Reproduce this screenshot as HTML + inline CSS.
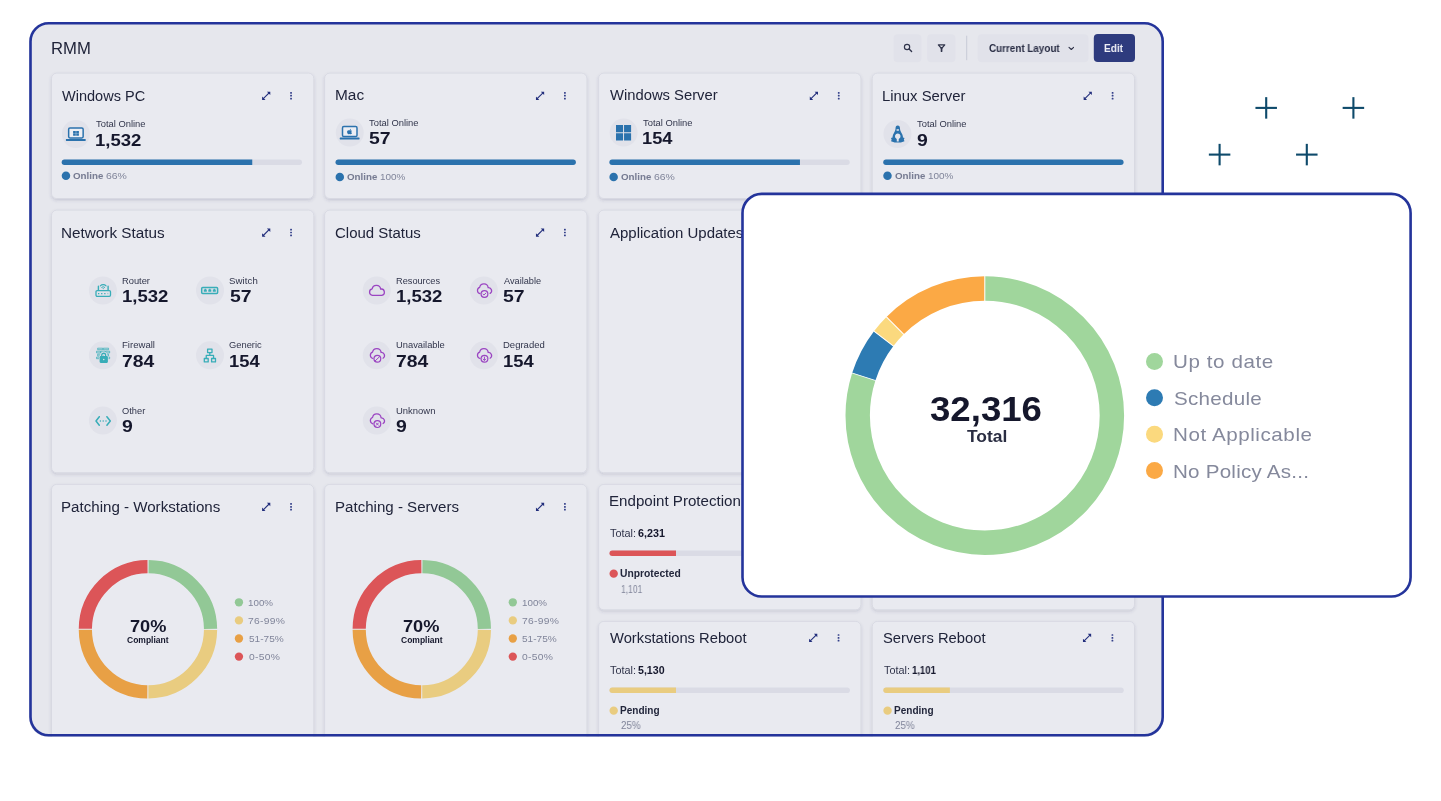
<!DOCTYPE html>
<html lang="en"><head><meta charset="utf-8"><title>RMM Dashboard</title>
<style>
html,body{margin:0;padding:0;background:#fff;}
body{width:1441px;height:801px;position:relative;overflow:hidden;font-family:"Liberation Sans",sans-serif;}
.a{position:absolute;}
.t{position:absolute;white-space:nowrap;transform-origin:0 50%;will-change:transform;}
.card{position:absolute;box-sizing:border-box;background:#e9eaf0;border:1px solid #dfe0e8;border-radius:5px;box-shadow:0 2px 5px rgba(60,65,100,.13),0 0 2px rgba(60,65,100,.06);}
</style></head><body>
<div class="a" id="panel" style="left:29.2px;top:22.0px;width:1134.8px;height:714.6px;border-radius:19.5px;background:#e6e7ed;overflow:hidden">
<div class="a" style="left:-29.2px;top:-22.0px;width:1441px;height:801px">
<svg class="a" style="left:0;top:0" width="1441" height="801" viewBox="0 0 1441 801"><defs><filter id="sh" x="-5%" y="-5%" width="110%" height="115%"><feDropShadow dx="0" dy="1.6" stdDeviation="1.7" flood-color="#3c4166" flood-opacity="0.17"/></filter></defs><g filter="url(#sh)"><rect x="51.50" y="73.10" width="262.30" height="125.40" rx="5.2" fill="#e9eaf0" stroke="#d6d7e1" stroke-width="0.8"/><rect x="324.60" y="73.10" width="262.30" height="125.40" rx="5.2" fill="#e9eaf0" stroke="#d6d7e1" stroke-width="0.8"/><rect x="598.60" y="73.10" width="262.30" height="125.40" rx="5.2" fill="#e9eaf0" stroke="#d6d7e1" stroke-width="0.8"/><rect x="872.20" y="73.10" width="262.30" height="125.40" rx="5.2" fill="#e9eaf0" stroke="#d6d7e1" stroke-width="0.8"/><rect x="51.50" y="210.10" width="262.30" height="262.60" rx="5.2" fill="#e9eaf0" stroke="#d6d7e1" stroke-width="0.8"/><rect x="324.60" y="210.10" width="262.30" height="262.60" rx="5.2" fill="#e9eaf0" stroke="#d6d7e1" stroke-width="0.8"/><rect x="598.60" y="210.10" width="262.30" height="262.60" rx="5.2" fill="#e9eaf0" stroke="#d6d7e1" stroke-width="0.8"/><rect x="872.20" y="210.10" width="262.30" height="262.60" rx="5.2" fill="#e9eaf0" stroke="#d6d7e1" stroke-width="0.8"/><rect x="51.50" y="484.40" width="262.30" height="262.50" rx="5.2" fill="#e9eaf0" stroke="#d6d7e1" stroke-width="0.8"/><rect x="324.60" y="484.40" width="262.30" height="262.50" rx="5.2" fill="#e9eaf0" stroke="#d6d7e1" stroke-width="0.8"/><rect x="598.60" y="484.40" width="262.30" height="125.40" rx="5.2" fill="#e9eaf0" stroke="#d6d7e1" stroke-width="0.8"/><rect x="872.20" y="484.40" width="262.30" height="125.40" rx="5.2" fill="#e9eaf0" stroke="#d6d7e1" stroke-width="0.8"/><rect x="598.60" y="621.40" width="262.30" height="125.40" rx="5.2" fill="#e9eaf0" stroke="#d6d7e1" stroke-width="0.8"/><rect x="872.20" y="621.40" width="262.30" height="125.40" rx="5.2" fill="#e9eaf0" stroke="#d6d7e1" stroke-width="0.8"/></g></svg>
<svg class="a" style="left:0;top:0" width="1441" height="801" viewBox="0 0 1441 801"><rect x="893.60" y="34.20" width="27.80" height="28.00" rx="4" fill="#e1e2ea"/><rect x="927.20" y="34.20" width="28.20" height="28.00" rx="4" fill="#e1e2ea"/><rect x="966.20" y="35.70" width="1.00" height="24.50" rx="0" fill="#c8cad6"/><rect x="977.70" y="34.20" width="110.70" height="28.00" rx="4" fill="#e1e2ea"/><rect x="1093.80" y="34.10" width="41.20" height="27.90" rx="4" fill="#2e3b7e"/><circle cx="907.05" cy="47.05" r="2.65" fill="none" stroke="#30344b" stroke-width="1.15"/><path d="M909.1 49.1L911.6 51.6" stroke="#30344b" stroke-width="1.35" stroke-linecap="round"/><path d="M938.3 44.85H944.8L941.55 48.5Z" fill="none" stroke="#30344b" stroke-width="1.15" stroke-linejoin="round"/><path d="M941.55 48.2V51.2" stroke="#30344b" stroke-width="1.7" stroke-linecap="round"/><g transform="translate(1068.40 46.30)"><path d="M0.6 1L2.9 3.2L5.2 1" fill="none" stroke="#2a2e45" stroke-width="1.05" stroke-linecap="round" stroke-linejoin="round"/></g><g transform="translate(261.70 91.30)"><path d="M1.6 7.4L7.4 1.6" stroke="#222e7c" stroke-width="1.1"/><path d="M5.2 0.4H8.6V3.8Z M0.4 5.2V8.6H3.8Z" fill="#222e7c"/></g><rect x="290.15" y="92.00" width="1.80" height="1.70" rx="0.5" fill="#34408a"/><rect x="290.15" y="94.85" width="1.80" height="1.70" rx="0.5" fill="#34408a"/><rect x="290.15" y="97.70" width="1.80" height="1.70" rx="0.5" fill="#34408a"/><rect x="61.90" y="120.00" width="28.00" height="28.00" rx="14" fill="#e1e2ea"/><g transform="translate(75.90 134.00)"><rect x="-7.25" y="-6.0" width="14.5" height="9.9" rx="1.3" fill="#eceef4" stroke="#2b72ad" stroke-width="1.5"/><rect x="-10" y="4.9" width="19.8" height="2" rx="0.4" fill="#2b72ad"/><path d="M-2.8 -2.9h2.7v2.1h-2.7zM0.3 -2.9h2.7v2.1h-2.7zM-2.8 -0.4h2.7v2.1h-2.7zM0.3 -0.4h2.7v2.1h-2.7z" fill="#2b72ad"/></g><rect x="61.70" y="159.50" width="240.30" height="5.50" rx="2.75" fill="#dadbe5"/><path d="M64.45 159.50H252.26V165.00H64.45A2.75 2.75 0 0 1 64.45 159.50Z" fill="#2b72ad"/><rect x="61.70" y="171.45" width="8.50" height="8.50" rx="4.25" fill="#2b72ad"/><g transform="translate(535.55 91.30)"><path d="M1.6 7.4L7.4 1.6" stroke="#222e7c" stroke-width="1.1"/><path d="M5.2 0.4H8.6V3.8Z M0.4 5.2V8.6H3.8Z" fill="#222e7c"/></g><rect x="564.00" y="92.00" width="1.80" height="1.70" rx="0.5" fill="#34408a"/><rect x="564.00" y="94.85" width="1.80" height="1.70" rx="0.5" fill="#34408a"/><rect x="564.00" y="97.70" width="1.80" height="1.70" rx="0.5" fill="#34408a"/><rect x="335.75" y="118.60" width="28.00" height="28.00" rx="14" fill="#e1e2ea"/><g transform="translate(349.75 132.60)"><rect x="-7.25" y="-6.0" width="14.5" height="9.9" rx="1.3" fill="#eceef4" stroke="#2b72ad" stroke-width="1.5"/><rect x="-10" y="4.9" width="19.8" height="2" rx="0.4" fill="#2b72ad"/><g transform="translate(-0.1 -0.6) scale(0.88)"><path d="M0.9 -1.9C0 -2.3 -0.6 -1.9 -1.2 -1.9C-2.3 -1.9 -2.9 -0.9 -2.9 0.1C-2.9 1.3 -2.1 2.6 -1.3 2.6C-0.8 2.6 -0.6 2.3 0 2.3C0.6 2.3 0.8 2.6 1.3 2.6C2 2.6 2.5 1.7 2.7 1.2C1.7 0.8 1.6 -0.7 2.6 -1.2C2.2 -1.8 1.5 -2.1 0.9 -1.9Z M0.2 -2.3C0.2 -3.1 0.8 -3.7 1.5 -3.8C1.6 -3 1 -2.3 0.2 -2.3Z" fill="#2b72ad"/></g></g><rect x="335.55" y="159.50" width="240.30" height="5.50" rx="2.75" fill="#dadbe5"/><rect x="335.55" y="159.50" width="240.30" height="5.50" rx="2.75" fill="#2b72ad"/><rect x="335.55" y="172.75" width="8.50" height="8.50" rx="4.25" fill="#2b72ad"/><g transform="translate(809.40 91.30)"><path d="M1.6 7.4L7.4 1.6" stroke="#222e7c" stroke-width="1.1"/><path d="M5.2 0.4H8.6V3.8Z M0.4 5.2V8.6H3.8Z" fill="#222e7c"/></g><rect x="837.85" y="92.00" width="1.80" height="1.70" rx="0.5" fill="#34408a"/><rect x="837.85" y="94.85" width="1.80" height="1.70" rx="0.5" fill="#34408a"/><rect x="837.85" y="97.70" width="1.80" height="1.70" rx="0.5" fill="#34408a"/><rect x="609.60" y="118.60" width="28.00" height="28.00" rx="14" fill="#e1e2ea"/><g transform="translate(623.60 132.60)"><path d="M-7.6 -7.5h7.05v7.2h-7.05zM0.45 -7.5h7.05v7.2h-7.05zM-7.6 0.7h7.05v7.2h-7.05zM0.45 0.7h7.05v7.2h-7.05z" fill="#2b72ad"/></g><rect x="609.40" y="159.50" width="240.30" height="5.50" rx="2.75" fill="#dadbe5"/><path d="M612.15 159.50H799.96V165.00H612.15A2.75 2.75 0 0 1 612.15 159.50Z" fill="#2b72ad"/><rect x="609.40" y="172.75" width="8.50" height="8.50" rx="4.25" fill="#2b72ad"/><g transform="translate(1083.25 91.30)"><path d="M1.6 7.4L7.4 1.6" stroke="#222e7c" stroke-width="1.1"/><path d="M5.2 0.4H8.6V3.8Z M0.4 5.2V8.6H3.8Z" fill="#222e7c"/></g><rect x="1111.70" y="92.00" width="1.80" height="1.70" rx="0.5" fill="#34408a"/><rect x="1111.70" y="94.85" width="1.80" height="1.70" rx="0.5" fill="#34408a"/><rect x="1111.70" y="97.70" width="1.80" height="1.70" rx="0.5" fill="#34408a"/><rect x="883.45" y="120.00" width="28.00" height="28.00" rx="14" fill="#e1e2ea"/><g transform="translate(897.45 134.00)"><path d="M0.3 -8.4C1.9 -8.4 2.5 -7.1 2.5 -5.8C2.5 -3.4 3.9 -1.6 4.9 0.6C5.4 1.8 5.6 2.9 5.5 3.6L7.1 4.1L6.4 5.4L7 7.3L3.4 8.5H-2.8L-6.4 7.3L-5.8 5.4L-6.5 4.1L-4.9 3.6C-5 2.9 -4.8 1.8 -4.3 0.6C-3.3 -1.6 -1.9 -3.4 -1.9 -5.8C-1.9 -7.1 -1.3 -8.4 0.3 -8.4Z" fill="#2b72ad"/><rect x="-0.95" y="-4.8" width="2.5" height="1.5" rx="0.4" fill="#e4e5ed"/><path d="M0.3 -0.5A2.8 2.8 0 0 1 1.9 4.6L1.3 5V7.5H-0.7V5L-1.3 4.6A2.8 2.8 0 0 1 0.3 -0.5Z" fill="#e4e5ed"/></g><rect x="883.25" y="159.50" width="240.30" height="5.50" rx="2.75" fill="#dadbe5"/><rect x="883.25" y="159.50" width="240.30" height="5.50" rx="2.75" fill="#2b72ad"/><rect x="883.25" y="171.45" width="8.50" height="8.50" rx="4.25" fill="#2b72ad"/><g transform="translate(261.70 228.10)"><path d="M1.6 7.4L7.4 1.6" stroke="#222e7c" stroke-width="1.1"/><path d="M5.2 0.4H8.6V3.8Z M0.4 5.2V8.6H3.8Z" fill="#222e7c"/></g><rect x="290.15" y="228.80" width="1.80" height="1.70" rx="0.5" fill="#34408a"/><rect x="290.15" y="231.65" width="1.80" height="1.70" rx="0.5" fill="#34408a"/><rect x="290.15" y="234.50" width="1.80" height="1.70" rx="0.5" fill="#34408a"/><g transform="translate(535.55 228.10)"><path d="M1.6 7.4L7.4 1.6" stroke="#222e7c" stroke-width="1.1"/><path d="M5.2 0.4H8.6V3.8Z M0.4 5.2V8.6H3.8Z" fill="#222e7c"/></g><rect x="564.00" y="228.80" width="1.80" height="1.70" rx="0.5" fill="#34408a"/><rect x="564.00" y="231.65" width="1.80" height="1.70" rx="0.5" fill="#34408a"/><rect x="564.00" y="234.50" width="1.80" height="1.70" rx="0.5" fill="#34408a"/><rect x="88.90" y="276.50" width="28.00" height="28.00" rx="14" fill="#e1e2ea"/><g transform="translate(102.90 290.50)"><path d="M-5.7 0.1H6.4A1.2 1.2 0 0 1 7.6 1.3V4.6A1.2 1.2 0 0 1 6.4 5.8H-5.7A1.2 1.2 0 0 1 -6.9 4.6V1.3A1.2 1.2 0 0 1 -5.7 0.1Z" fill="none" stroke="#38adb8" stroke-width="1.3" stroke-linecap="round" stroke-linejoin="round"/><path d="M-4.5 -0.2V-4.2M5.2 -0.2V-4.2" fill="none" stroke="#38adb8" stroke-width="1.4" stroke-linecap="round" stroke-linejoin="round"/><path d="M-2.6 -4.6A4 4 0 0 1 3.2 -4.6" fill="none" stroke="#38adb8" stroke-width="1.1" stroke-linecap="round" stroke-linejoin="round"/><path d="M-1.2 -3.2A2.2 2.2 0 0 1 1.8 -3.2" fill="none" stroke="#38adb8" stroke-width="1.0" stroke-linecap="round" stroke-linejoin="round"/><circle cx="0.3" cy="-1.9" r="0.6" fill="#38adb8"/><path d="M-4.9 2.4h1.3v1.3h-1.3zM-1.8 2.4h1.3v1.3h-1.3zM1.3 2.4h1.3v1.3h-1.3z" fill="#38adb8"/><rect x="4.3" y="2.4" width="1.2" height="1.3" fill="#38adb8" opacity="0.45"/></g><rect x="196.00" y="276.50" width="28.00" height="28.00" rx="14" fill="#e1e2ea"/><g transform="translate(210.00 290.50)"><path d="M-7.3 -3H6.6A1 1 0 0 1 7.6 -2V1.9A1 1 0 0 1 6.6 2.9H-7.3A1 1 0 0 1 -8.3 1.9V-2A1 1 0 0 1 -7.3 -3Z" fill="none" stroke="#38adb8" stroke-width="1.5" stroke-linecap="round" stroke-linejoin="round"/><path d="M-6.2 1.3V-0.9H-5.3V-1.7H-4.1000000000000005V-0.9H-3.2V1.3Z" fill="#38adb8"/><path d="M-1.7 1.3V-0.9H-0.8V-1.7H0.39999999999999997V-0.9H1.3V1.3Z" fill="#38adb8"/><path d="M2.8 1.3V-0.9H3.6999999999999997V-1.7H4.8999999999999995V-0.9H5.8V1.3Z" fill="#38adb8"/></g><rect x="88.90" y="341.30" width="28.00" height="28.00" rx="14" fill="#e1e2ea"/><g transform="translate(102.90 355.30)"><path d="M-5.25 -7.1H-0.15V-5.6H-5.25ZM0.35 -7.1H5.65V-5.6H0.35ZM-6.35 -4.1H-2.45V-2.4H-6.35ZM-1.9500000000000002 -4.1H2.35V-2.4H-1.9500000000000002ZM2.85 -4.1H6.75V-2.4H2.85ZM-5.25 -1.1H-0.15V0.6H-5.25ZM0.35 -1.1H5.65V0.6H0.35ZM-6.35 1.8H-2.45V3.4H-6.35ZM-1.9500000000000002 1.8H2.35V3.4H-1.9500000000000002ZM2.85 1.8H6.75V3.4H2.85Z" fill="none" stroke="#38adb8" stroke-width="0.9" stroke-linejoin="round" opacity="0.85"/><path d="M-1.2 1.4V-0.1A2 2 0 0 1 2.8 -0.1V1.4" fill="none" stroke="#e1e2ea" stroke-width="3"/><rect x="-3.9" y="0.2" width="9.5" height="8" rx="1.6" fill="#e1e2ea"/><path d="M-1.15 1.4V-0.1A1.95 1.95 0 0 1 2.75 -0.1V1.4" fill="none" stroke="#38adb8" stroke-width="1.3"/><rect x="-3.3" y="0.8" width="8.3" height="6.8" rx="1.1" fill="#38adb8"/><circle cx="0.85" cy="4.2" r="0.75" fill="#e1e2ea"/></g><rect x="196.00" y="341.30" width="28.00" height="28.00" rx="14" fill="#e1e2ea"/><g transform="translate(210.00 355.30)"><path d="M-2.4 -6.2H2V-2.7H-2.4Z M-5.7 3.2H-1.8V6.6H-5.7Z M1.6 3.2H5.5V6.6H1.6Z" fill="none" stroke="#38adb8" stroke-width="1.3" stroke-linecap="round" stroke-linejoin="round"/><path d="M-0.2 -2.6V0.1M-3.75 3V0.1H3.55V3" fill="none" stroke="#38adb8" stroke-width="1.3" stroke-linecap="round" stroke-linejoin="round"/></g><rect x="88.90" y="406.60" width="28.00" height="28.00" rx="14" fill="#e1e2ea"/><g transform="translate(102.90 420.60)"><path d="M-3.6 -3.9L-6.9 0.4L-3.6 4.6M4 -3.9L7.4 0.4L4 4.6" fill="none" stroke="#38adb8" stroke-width="1.5" stroke-linecap="round" stroke-linejoin="round"/><circle cx="-2.55" cy="0.4" r="0.75" fill="#38adb8"/><circle cx="0.3" cy="0.4" r="0.75" fill="#38adb8"/><circle cx="3.1" cy="0.4" r="0.75" fill="#38adb8"/></g><rect x="362.75" y="276.50" width="28.00" height="28.00" rx="14" fill="#e1e2ea"/><g transform="translate(376.75 290.50)"><path d="M-4.3 4.8A3.3 3.3 0 0 1 -4.6 -1.7A4.3 4.3 0 0 1 3.9 -1.4A3.1 3.1 0 0 1 5 4.8Z" fill="none" stroke="#9b45c2" stroke-width="1.3" stroke-linecap="round" stroke-linejoin="round"/></g><rect x="469.85" y="276.50" width="28.00" height="28.00" rx="14" fill="#e1e2ea"/><g transform="translate(483.85 290.50)"><path d="M-3.9 3.2A3.3 3.3 0 0 1 -4.2 -3.1A4.3 4.3 0 0 1 4.3 -2.8A3.1 3.1 0 0 1 6.3 2.9" fill="none" stroke="#9b45c2" stroke-width="1.25" stroke-linecap="round" stroke-linejoin="round"/><circle cx="0.6" cy="3.5" r="3.4" fill="#e1e2ea" stroke="#9b45c2" stroke-width="1.2"/><path d="M-0.8 3.7L0.1 4.5L2 2.6" fill="none" stroke="#9b45c2" stroke-width="1.0" stroke-linecap="round" stroke-linejoin="round"/></g><rect x="362.75" y="341.30" width="28.00" height="28.00" rx="14" fill="#e1e2ea"/><g transform="translate(376.75 355.30)"><path d="M-3.9 3.2A3.3 3.3 0 0 1 -4.2 -3.1A4.3 4.3 0 0 1 4.3 -2.8A3.1 3.1 0 0 1 6.3 2.9" fill="none" stroke="#9b45c2" stroke-width="1.25" stroke-linecap="round" stroke-linejoin="round"/><circle cx="0.6" cy="3.5" r="3.4" fill="#e1e2ea" stroke="#9b45c2" stroke-width="1.2"/><path d="M-1.6 5.6L2.8 1.4" fill="none" stroke="#9b45c2" stroke-width="1.0" stroke-linecap="round" stroke-linejoin="round"/></g><rect x="469.85" y="341.30" width="28.00" height="28.00" rx="14" fill="#e1e2ea"/><g transform="translate(483.85 355.30)"><path d="M-3.9 3.2A3.3 3.3 0 0 1 -4.2 -3.1A4.3 4.3 0 0 1 4.3 -2.8A3.1 3.1 0 0 1 6.3 2.9" fill="none" stroke="#9b45c2" stroke-width="1.25" stroke-linecap="round" stroke-linejoin="round"/><circle cx="0.6" cy="3.5" r="3.4" fill="#e1e2ea" stroke="#9b45c2" stroke-width="1.2"/><path d="M0.6 1.7V5M-0.7 3.8L0.6 5.1L1.9 3.8" fill="none" stroke="#9b45c2" stroke-width="0.95" stroke-linecap="round" stroke-linejoin="round"/></g><rect x="362.75" y="406.60" width="28.00" height="28.00" rx="14" fill="#e1e2ea"/><g transform="translate(376.75 420.60)"><path d="M-3.9 3.2A3.3 3.3 0 0 1 -4.2 -3.1A4.3 4.3 0 0 1 4.3 -2.8A3.1 3.1 0 0 1 6.3 2.9" fill="none" stroke="#9b45c2" stroke-width="1.25" stroke-linecap="round" stroke-linejoin="round"/><circle cx="0.6" cy="3.5" r="3.4" fill="#e1e2ea" stroke="#9b45c2" stroke-width="1.2"/><path d="M-0.5 2.4L1.7 4.6M1.7 2.4L-0.5 4.6" fill="none" stroke="#9b45c2" stroke-width="0.95" stroke-linecap="round" stroke-linejoin="round"/></g><g transform="translate(261.70 502.40)"><path d="M1.6 7.4L7.4 1.6" stroke="#222e7c" stroke-width="1.1"/><path d="M5.2 0.4H8.6V3.8Z M0.4 5.2V8.6H3.8Z" fill="#222e7c"/></g><rect x="290.15" y="503.10" width="1.80" height="1.70" rx="0.5" fill="#34408a"/><rect x="290.15" y="505.95" width="1.80" height="1.70" rx="0.5" fill="#34408a"/><rect x="290.15" y="508.80" width="1.80" height="1.70" rx="0.5" fill="#34408a"/><g transform="translate(147.95 629.30)"><circle r="62.6" fill="none" stroke="#92c896" stroke-width="13.2" stroke-dasharray="97.132 296.196" transform="rotate(-89.45)"/><circle r="62.6" fill="none" stroke="#e9cc80" stroke-width="13.2" stroke-dasharray="97.132 296.196" transform="rotate(0.55)"/><circle r="62.6" fill="none" stroke="#e8a045" stroke-width="13.2" stroke-dasharray="97.132 296.196" transform="rotate(90.55)"/><circle r="62.6" fill="none" stroke="#dc5558" stroke-width="13.2" stroke-dasharray="97.132 296.196" transform="rotate(180.55)"/></g><rect x="234.80" y="598.15" width="8.30" height="8.30" rx="4.15" fill="#92c896"/><rect x="234.80" y="616.25" width="8.30" height="8.30" rx="4.15" fill="#e9cc80"/><rect x="234.80" y="634.35" width="8.30" height="8.30" rx="4.15" fill="#e8a045"/><rect x="234.80" y="652.45" width="8.30" height="8.30" rx="4.15" fill="#dc5558"/><g transform="translate(535.55 502.40)"><path d="M1.6 7.4L7.4 1.6" stroke="#222e7c" stroke-width="1.1"/><path d="M5.2 0.4H8.6V3.8Z M0.4 5.2V8.6H3.8Z" fill="#222e7c"/></g><rect x="564.00" y="503.10" width="1.80" height="1.70" rx="0.5" fill="#34408a"/><rect x="564.00" y="505.95" width="1.80" height="1.70" rx="0.5" fill="#34408a"/><rect x="564.00" y="508.80" width="1.80" height="1.70" rx="0.5" fill="#34408a"/><g transform="translate(421.80 629.30)"><circle r="62.6" fill="none" stroke="#92c896" stroke-width="13.2" stroke-dasharray="97.132 296.196" transform="rotate(-89.45)"/><circle r="62.6" fill="none" stroke="#e9cc80" stroke-width="13.2" stroke-dasharray="97.132 296.196" transform="rotate(0.55)"/><circle r="62.6" fill="none" stroke="#e8a045" stroke-width="13.2" stroke-dasharray="97.132 296.196" transform="rotate(90.55)"/><circle r="62.6" fill="none" stroke="#dc5558" stroke-width="13.2" stroke-dasharray="97.132 296.196" transform="rotate(180.55)"/></g><rect x="508.65" y="598.15" width="8.30" height="8.30" rx="4.15" fill="#92c896"/><rect x="508.65" y="616.25" width="8.30" height="8.30" rx="4.15" fill="#e9cc80"/><rect x="508.65" y="634.35" width="8.30" height="8.30" rx="4.15" fill="#e8a045"/><rect x="508.65" y="652.45" width="8.30" height="8.30" rx="4.15" fill="#dc5558"/><rect x="609.50" y="550.40" width="240.40" height="5.60" rx="2.8" fill="#dadbe5"/><path d="M612.30 550.40H676.00V556.00H612.30A2.8 2.8 0 0 1 612.30 550.40Z" fill="#dc5558"/><rect x="609.50" y="569.45" width="8.40" height="8.40" rx="4.2" fill="#dc5558"/><g transform="translate(808.70 633.45)"><path d="M1.6 7.4L7.4 1.6" stroke="#222e7c" stroke-width="1.1"/><path d="M5.2 0.4H8.6V3.8Z M0.4 5.2V8.6H3.8Z" fill="#222e7c"/></g><rect x="837.65" y="634.15" width="1.80" height="1.70" rx="0.5" fill="#34408a"/><rect x="837.65" y="637.00" width="1.80" height="1.70" rx="0.5" fill="#34408a"/><rect x="837.65" y="639.85" width="1.80" height="1.70" rx="0.5" fill="#34408a"/><rect x="609.50" y="687.40" width="240.40" height="5.60" rx="2.8" fill="#dadbe5"/><path d="M612.30 687.40H676.00V693.00H612.30A2.8 2.8 0 0 1 612.30 687.40Z" fill="#e9cc80"/><rect x="609.50" y="706.45" width="8.40" height="8.40" rx="4.2" fill="#e9cc80"/><g transform="translate(1082.55 633.45)"><path d="M1.6 7.4L7.4 1.6" stroke="#222e7c" stroke-width="1.1"/><path d="M5.2 0.4H8.6V3.8Z M0.4 5.2V8.6H3.8Z" fill="#222e7c"/></g><rect x="1111.50" y="634.15" width="1.80" height="1.70" rx="0.5" fill="#34408a"/><rect x="1111.50" y="637.00" width="1.80" height="1.70" rx="0.5" fill="#34408a"/><rect x="1111.50" y="639.85" width="1.80" height="1.70" rx="0.5" fill="#34408a"/><rect x="883.35" y="687.40" width="240.40" height="5.60" rx="2.8" fill="#dadbe5"/><path d="M886.15 687.40H949.85V693.00H886.15A2.8 2.8 0 0 1 886.15 687.40Z" fill="#e9cc80"/><rect x="883.35" y="706.45" width="8.40" height="8.40" rx="4.2" fill="#e9cc80"/></svg>
<div class="t" style="left:50.67px;top:39px;font-size:16.5px;line-height:19px;color:#20243a;transform:scaleX(1.0106);">RMM</div>
<div class="t" style="left:988.61px;top:42px;font-size:10.2px;line-height:13px;color:#2a2e45;font-weight:700;transform:scaleX(0.9673);">Current Layout</div>
<div class="t" style="left:1104.14px;top:42px;font-size:10.2px;line-height:13px;color:#eeeff6;font-weight:700;transform:scaleX(0.9912);">Edit</div>
<div class="t" style="left:62.03px;top:88px;font-size:14px;line-height:16px;color:#20243a;transform:scaleX(1.0375);">Windows PC</div>
<div class="t" style="left:95.61px;top:119px;font-size:8.8px;line-height:11px;color:#31354b;transform:scaleX(1.0655);">Total Online</div>
<div class="t" style="left:94.69px;top:131px;font-size:16.2px;line-height:19px;color:#15172c;font-weight:700;transform:scaleX(1.1445);">1,532</div>
<div class="t" style="left:73.21px;top:170px;font-size:9.8px;line-height:12px;color:#747990;font-weight:700;transform:scaleX(0.9952);">Online</div>
<div class="t" style="left:106.28px;top:170px;font-size:9.8px;line-height:12px;color:#80859a;transform:scaleX(1.0657);">66%</div>
<div class="t" style="left:334.72px;top:87px;font-size:14px;line-height:16px;color:#20243a;transform:scaleX(1.1004);">Mac</div>
<div class="t" style="left:369.46px;top:118px;font-size:8.8px;line-height:11px;color:#31354b;transform:scaleX(1.0655);">Total Online</div>
<div class="t" style="left:369.07px;top:129px;font-size:16.2px;line-height:19px;color:#15172c;font-weight:700;transform:scaleX(1.1990);">57</div>
<div class="t" style="left:347.06px;top:171px;font-size:9.8px;line-height:12px;color:#747990;font-weight:700;transform:scaleX(0.9952);">Online</div>
<div class="t" style="left:379.90px;top:171px;font-size:9.8px;line-height:12px;color:#80859a;transform:scaleX(1.0162);">100%</div>
<div class="t" style="left:609.73px;top:87px;font-size:14px;line-height:16px;color:#20243a;transform:scaleX(1.0564);">Windows Server</div>
<div class="t" style="left:643.31px;top:118px;font-size:8.8px;line-height:11px;color:#31354b;transform:scaleX(1.0655);">Total Online</div>
<div class="t" style="left:642.40px;top:129px;font-size:16.2px;line-height:19px;color:#15172c;font-weight:700;transform:scaleX(1.1265);">154</div>
<div class="t" style="left:620.91px;top:171px;font-size:9.8px;line-height:12px;color:#747990;font-weight:700;transform:scaleX(0.9952);">Online</div>
<div class="t" style="left:653.98px;top:171px;font-size:9.8px;line-height:12px;color:#80859a;transform:scaleX(1.0657);">66%</div>
<div class="t" style="left:882.46px;top:88px;font-size:14px;line-height:16px;color:#20243a;transform:scaleX(1.0607);">Linux Server</div>
<div class="t" style="left:917.16px;top:119px;font-size:8.8px;line-height:11px;color:#31354b;transform:scaleX(1.0655);">Total Online</div>
<div class="t" style="left:916.67px;top:131px;font-size:16.2px;line-height:19px;color:#15172c;font-weight:700;letter-spacing:0.643px;transform:scaleX(1.2000);">9</div>
<div class="t" style="left:894.76px;top:170px;font-size:9.8px;line-height:12px;color:#747990;font-weight:700;transform:scaleX(0.9952);">Online</div>
<div class="t" style="left:927.60px;top:170px;font-size:9.8px;line-height:12px;color:#80859a;transform:scaleX(1.0162);">100%</div>
<div class="t" style="left:60.88px;top:225px;font-size:14px;line-height:16px;color:#20243a;transform:scaleX(1.0921);">Network Status</div>
<div class="t" style="left:335.20px;top:225px;font-size:14px;line-height:16px;color:#20243a;transform:scaleX(1.0702);">Cloud Status</div>
<div class="t" style="left:609.80px;top:225px;font-size:14px;line-height:16px;color:#20243a;transform:scaleX(1.0706);">Application Updates</div>
<div class="t" style="left:121.95px;top:276px;font-size:8.6px;line-height:11px;color:#31354b;transform:scaleX(1.0847);">Router</div>
<div class="t" style="left:121.99px;top:287px;font-size:16.2px;line-height:19px;color:#15172c;font-weight:700;transform:scaleX(1.1445);">1,532</div>
<div class="t" style="left:229.37px;top:276px;font-size:8.6px;line-height:11px;color:#31354b;letter-spacing:0.088px;transform:scaleX(1.1200);">Switch</div>
<div class="t" style="left:229.62px;top:287px;font-size:16.2px;line-height:19px;color:#15172c;font-weight:700;transform:scaleX(1.1990);">57</div>
<div class="t" style="left:121.93px;top:340px;font-size:8.6px;line-height:11px;color:#31354b;transform:scaleX(1.1135);">Firewall</div>
<div class="t" style="left:122.33px;top:352px;font-size:16.2px;line-height:19px;color:#15172c;font-weight:700;transform:scaleX(1.1927);">784</div>
<div class="t" style="left:229.33px;top:340px;font-size:8.6px;line-height:11px;color:#31354b;transform:scaleX(1.0864);">Generic</div>
<div class="t" style="left:229.10px;top:352px;font-size:16.2px;line-height:19px;color:#15172c;font-weight:700;transform:scaleX(1.1343);">154</div>
<div class="t" style="left:122.28px;top:406px;font-size:8.6px;line-height:11px;color:#31354b;transform:scaleX(1.0818);">Other</div>
<div class="t" style="left:122.42px;top:417px;font-size:16.2px;line-height:19px;color:#15172c;font-weight:700;letter-spacing:0.643px;transform:scaleX(1.2000);">9</div>
<div class="t" style="left:395.81px;top:276px;font-size:8.6px;line-height:11px;color:#31354b;transform:scaleX(1.0718);">Resources</div>
<div class="t" style="left:395.84px;top:287px;font-size:16.2px;line-height:19px;color:#15172c;font-weight:700;transform:scaleX(1.1445);">1,532</div>
<div class="t" style="left:503.65px;top:276px;font-size:8.6px;line-height:11px;color:#31354b;transform:scaleX(1.0682);">Available</div>
<div class="t" style="left:503.47px;top:287px;font-size:16.2px;line-height:19px;color:#15172c;font-weight:700;transform:scaleX(1.1990);">57</div>
<div class="t" style="left:395.85px;top:340px;font-size:8.6px;line-height:11px;color:#31354b;transform:scaleX(1.0865);">Unavailable</div>
<div class="t" style="left:396.18px;top:352px;font-size:16.2px;line-height:19px;color:#15172c;font-weight:700;transform:scaleX(1.1927);">784</div>
<div class="t" style="left:502.89px;top:340px;font-size:8.6px;line-height:11px;color:#31354b;transform:scaleX(1.1066);">Degraded</div>
<div class="t" style="left:502.95px;top:352px;font-size:16.2px;line-height:19px;color:#15172c;font-weight:700;transform:scaleX(1.1343);">154</div>
<div class="t" style="left:395.84px;top:406px;font-size:8.6px;line-height:11px;color:#31354b;transform:scaleX(1.0993);">Unknown</div>
<div class="t" style="left:396.27px;top:417px;font-size:16.2px;line-height:19px;color:#15172c;font-weight:700;letter-spacing:0.643px;transform:scaleX(1.2000);">9</div>
<div class="t" style="left:60.89px;top:499px;font-size:14px;line-height:16px;color:#20243a;transform:scaleX(1.0791);">Patching - Workstations</div>
<div class="t" style="left:129.62px;top:618px;font-size:16px;line-height:18px;color:#15172c;font-weight:700;transform:scaleX(1.1370);">70%</div>
<div class="t" style="left:127.31px;top:635px;font-size:8.5px;line-height:11px;color:#15172c;font-weight:700;">Compliant</div>
<div class="t" style="left:248.27px;top:597px;font-size:9.2px;line-height:12px;color:#80859a;transform:scaleX(1.0648);">100%</div>
<div class="t" style="left:248.48px;top:615px;font-size:9.2px;line-height:12px;color:#80859a;letter-spacing:0.237px;transform:scaleX(1.1200);">76-99%</div>
<div class="t" style="left:248.60px;top:633px;font-size:9.2px;line-height:12px;color:#80859a;transform:scaleX(1.0950);">51-75%</div>
<div class="t" style="left:248.59px;top:651px;font-size:9.2px;line-height:12px;color:#80859a;letter-spacing:0.267px;transform:scaleX(1.1200);">0-50%</div>
<div class="t" style="left:334.74px;top:499px;font-size:14px;line-height:16px;color:#20243a;transform:scaleX(1.0772);">Patching - Servers</div>
<div class="t" style="left:403.47px;top:618px;font-size:16px;line-height:18px;color:#15172c;font-weight:700;transform:scaleX(1.1370);">70%</div>
<div class="t" style="left:401.16px;top:635px;font-size:8.5px;line-height:11px;color:#15172c;font-weight:700;">Compliant</div>
<div class="t" style="left:522.12px;top:597px;font-size:9.2px;line-height:12px;color:#80859a;transform:scaleX(1.0648);">100%</div>
<div class="t" style="left:522.33px;top:615px;font-size:9.2px;line-height:12px;color:#80859a;letter-spacing:0.237px;transform:scaleX(1.1200);">76-99%</div>
<div class="t" style="left:522.45px;top:633px;font-size:9.2px;line-height:12px;color:#80859a;transform:scaleX(1.0950);">51-75%</div>
<div class="t" style="left:522.44px;top:651px;font-size:9.2px;line-height:12px;color:#80859a;letter-spacing:0.267px;transform:scaleX(1.1200);">0-50%</div>
<div class="t" style="left:608.89px;top:493px;font-size:14px;line-height:16px;color:#20243a;transform:scaleX(1.0789);">Endpoint Protection</div>
<div class="t" style="left:609.98px;top:528px;font-size:10px;line-height:12px;color:#31354b;transform:scaleX(1.0857);">Total:</div>
<div class="t" style="left:638.42px;top:528px;font-size:10px;line-height:12px;color:#15172c;font-weight:700;transform:scaleX(1.0738);">6,231</div>
<div class="t" style="left:620.18px;top:568px;font-size:10px;line-height:12px;color:#23273c;font-weight:700;transform:scaleX(1.0304);">Unprotected</div>
<div class="t" style="left:620.76px;top:584px;font-size:10px;line-height:12px;color:#80859a;transform:scaleX(0.8487);">1,101</div>
<div class="t" style="left:610.03px;top:630px;font-size:14px;line-height:16px;color:#20243a;transform:scaleX(1.0533);">Workstations Reboot</div>
<div class="t" style="left:609.98px;top:665px;font-size:10px;line-height:12px;color:#31354b;transform:scaleX(1.0857);">Total:</div>
<div class="t" style="left:638.48px;top:665px;font-size:10px;line-height:12px;color:#15172c;font-weight:700;transform:scaleX(1.0617);">5,130</div>
<div class="t" style="left:620.15px;top:705px;font-size:10px;line-height:12px;color:#23273c;font-weight:700;transform:scaleX(1.0039);">Pending</div>
<div class="t" style="left:620.91px;top:720px;font-size:10px;line-height:12px;color:#80859a;transform:scaleX(0.9817);">25%</div>
<div class="t" style="left:883.29px;top:630px;font-size:14px;line-height:16px;color:#20243a;transform:scaleX(1.0536);">Servers Reboot</div>
<div class="t" style="left:883.83px;top:665px;font-size:10px;line-height:12px;color:#31354b;transform:scaleX(1.0857);">Total:</div>
<div class="t" style="left:912.08px;top:665px;font-size:10px;line-height:12px;color:#15172c;font-weight:700;transform:scaleX(0.9524);">1,101</div>
<div class="t" style="left:894.00px;top:705px;font-size:10px;line-height:12px;color:#23273c;font-weight:700;transform:scaleX(1.0039);">Pending</div>
<div class="t" style="left:894.76px;top:720px;font-size:10px;line-height:12px;color:#80859a;transform:scaleX(0.9817);">25%</div>
</div></div>
<svg class="a" style="left:0;top:0" width="1441" height="801" viewBox="0 0 1441 801"><rect x="30.50" y="23.30" width="1132.20" height="712.00" rx="18.20" fill="none" stroke="#24349b" stroke-width="2.6"/><rect x="1255.45" y="106.85" width="21.50" height="2.10" rx="0" fill="#0e4a6b"/><rect x="1265.15" y="97.15" width="2.10" height="21.50" rx="0" fill="#0e4a6b"/><rect x="1342.65" y="106.85" width="21.50" height="2.10" rx="0" fill="#0e4a6b"/><rect x="1352.35" y="97.15" width="2.10" height="21.50" rx="0" fill="#0e4a6b"/><rect x="1208.85" y="153.55" width="21.50" height="2.10" rx="0" fill="#0e4a6b"/><rect x="1218.55" y="143.85" width="2.10" height="21.50" rx="0" fill="#0e4a6b"/><rect x="1296.05" y="153.55" width="21.50" height="2.10" rx="0" fill="#0e4a6b"/><rect x="1305.75" y="143.85" width="2.10" height="21.50" rx="0" fill="#0e4a6b"/><rect x="742.50" y="193.90" width="668.10" height="402.60" rx="19.20" fill="#fff" stroke="#24349b" stroke-width="2.6"/><g transform="translate(984.80 415.60)"><circle r="127.1" fill="none" stroke="#a0d69c" stroke-width="24.4" stroke-dasharray="638.431 160.162" transform="rotate(-90.00)"/><circle r="127.1" fill="none" stroke="#2d7bb3" stroke-width="24.4" stroke-dasharray="43.257 755.336" transform="rotate(197.80)"/><circle r="127.1" fill="none" stroke="#fbd97e" stroke-width="24.4" stroke-dasharray="17.303 781.290" transform="rotate(217.30)"/><circle r="127.1" fill="none" stroke="#fba945" stroke-width="24.4" stroke-dasharray="99.602 698.991" transform="rotate(225.10)"/><line x1="0" y1="-114.40" x2="0" y2="-139.80" stroke="#fff" stroke-width="1" transform="rotate(0.00)"/><line x1="0" y1="-114.40" x2="0" y2="-139.80" stroke="#fff" stroke-width="1" transform="rotate(287.80)"/><line x1="0" y1="-114.40" x2="0" y2="-139.80" stroke="#fff" stroke-width="1" transform="rotate(307.30)"/><line x1="0" y1="-114.40" x2="0" y2="-139.80" stroke="#fff" stroke-width="1" transform="rotate(315.10)"/></g><rect x="1146.00" y="352.90" width="17.00" height="17.00" rx="8.5" fill="#a0d69c"/><rect x="1146.00" y="389.30" width="17.00" height="17.00" rx="8.5" fill="#2d7bb3"/><rect x="1146.00" y="425.70" width="17.00" height="17.00" rx="8.5" fill="#fbd97e"/><rect x="1146.00" y="462.10" width="17.00" height="17.00" rx="8.5" fill="#fba945"/></svg>
<div class="t" style="left:930.29px;top:391px;font-size:34.5px;line-height:37px;color:#15172c;font-weight:700;transform:scaleX(1.0609);">32,316</div>
<div class="t" style="left:966.93px;top:428px;font-size:16px;line-height:18px;color:#2a2d42;font-weight:700;transform:scaleX(1.0878);">Total</div>
<div class="t" style="left:1173.45px;top:351px;font-size:18.4px;line-height:21px;color:#85899c;letter-spacing:0.523px;transform:scaleX(1.1200);">Up to date</div>
<div class="t" style="left:1174.07px;top:388px;font-size:18.4px;line-height:21px;color:#85899c;letter-spacing:0.232px;transform:scaleX(1.1200);">Schedule</div>
<div class="t" style="left:1173.35px;top:424px;font-size:18.4px;line-height:21px;color:#85899c;letter-spacing:0.501px;transform:scaleX(1.1200);">Not Applicable</div>
<div class="t" style="left:1173.35px;top:461px;font-size:18.4px;line-height:21px;color:#85899c;letter-spacing:0.197px;transform:scaleX(1.1200);">No Policy As...</div>
</body></html>
